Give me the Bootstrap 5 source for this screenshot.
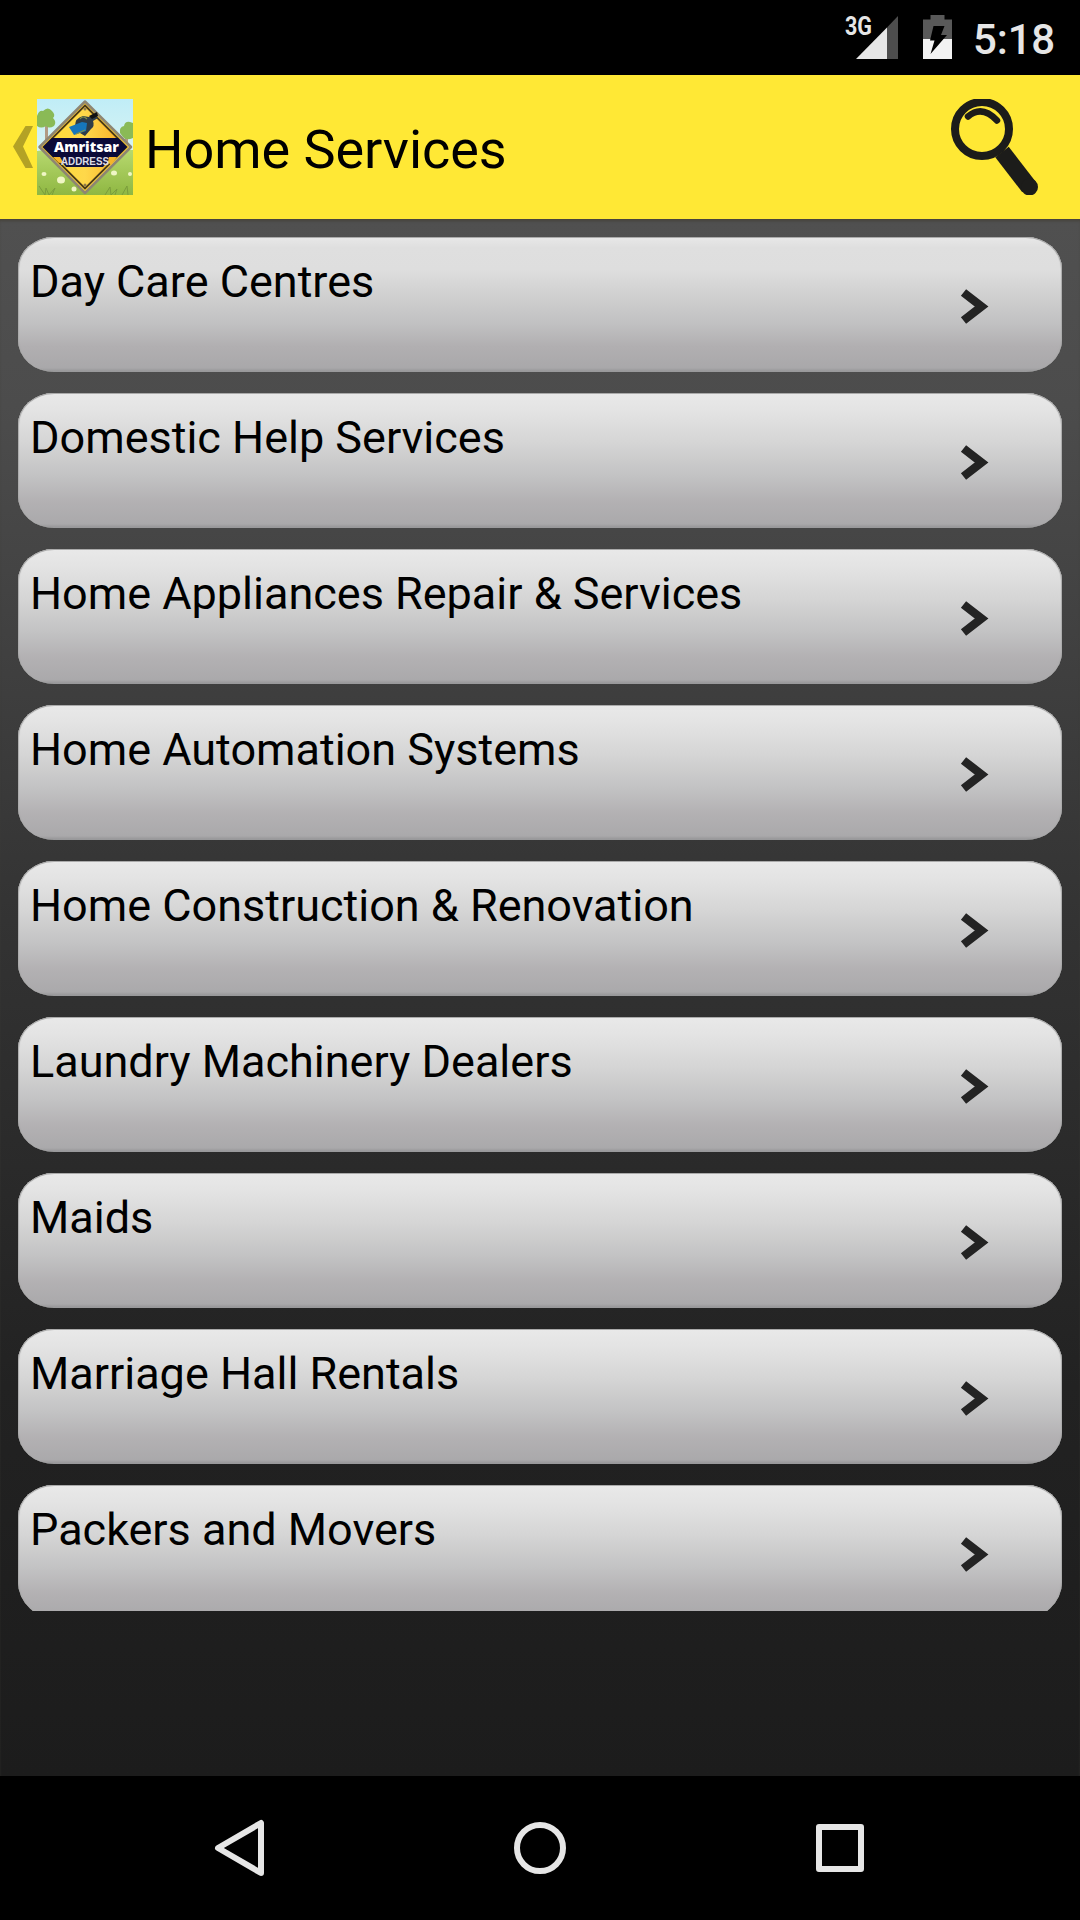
<!DOCTYPE html>
<html lang="en">
<head>
<meta charset="utf-8">
<meta name="viewport" content="width=device-width, initial-scale=1">
<title>Home Services</title>
<link href="https://cdn.jsdelivr.net/npm/bootstrap@5.3.0/dist/css/bootstrap.min.css" rel="stylesheet">
<style>
  body { font-family: Roboto, "Noto Sans", sans-serif; color: #000; height: 1920px; background: #000; }
  svg { display: block; flex: none; }
  .status-strip { height: 75px; padding-right: 25px; }
  .status-clock { font-size: 42px; line-height: 48px; font-weight: 500; color: #e6e6e6; margin: 4px 0 0 19px; letter-spacing: -.2px; }
  .app-header { height: 144px; background: #ffe835; padding: 0 38px 0 12px; }
  .app-title { font-size: 54px; line-height: 64px; font-weight: 400; margin: 5px 0 0 12px; letter-spacing: -.05px; }
  .screen-body { background: linear-gradient(#505050 0, #4c4c4c 12%, #333 45%, #222 75%, #1c1c1c 100%); box-shadow: inset 0 3px 3px -1px #46433b; }
  .service-list { height: 1392px; padding: 18px 18px 0; gap: 21px; }
  .service-item { height: 135px; flex: none; padding: 0 71px 0 12px; border-radius: 36px / 32px; color: #000;
    background: linear-gradient(#e9e9e9 0, #e3e3e3 14%, #d5d5d5 37%, #c2c2c3 62%, #b3b1b3 80%, #aaa9ab 97%, #929294 100%);
    box-shadow: inset 0 1px 0 #aaa, inset 1px 0 1px #aaa, inset -1px 0 1px #aaa; }
  .service-item:first-child { background: linear-gradient(#e8e8e8 0, #dfdfdf 8%, #dedede 24%, #d1d1d1 42%, #c1c1c2 64%, #b1afb1 81%, #a9a8aa 97%, #929294 100%); }
  .service-item:last-child { border-bottom-left-radius: 42px 38px; border-bottom-right-radius: 42px 38px; }
  .service-name { font-size: 45px; line-height: 52px; margin-top: 19px; letter-spacing: -.01px; white-space: nowrap; }
  .nav-keys { height: 144px; }
</style>
<script defer src="https://cdn.jsdelivr.net/npm/bootstrap@5.3.0/dist/js/bootstrap.bundle.min.js"></script>
</head>
<body class="d-flex flex-column overflow-hidden">

<div class="status-strip d-flex justify-content-end align-items-center flex-shrink-0">
  <svg width="110" height="75" viewBox="844 0 110 75">
    <text x="845" y="35" font-size="25" font-weight="700" fill="#e6e6e6" textLength="27" lengthAdjust="spacingAndGlyphs">3G</text>
    <path d="M887 27.5 898 16v43h-11z" fill="#4d4d4d"/>
    <path d="M856 59 887 27.5V59z" fill="#e6e6e6"/>
    <path d="M923 39V19.500h7.500V15h14v4.500H952V39z" fill="#595959"/>
    <path d="M923 39h29v20h-29z" fill="#f2f2f2"/>
    <path d="M933.500 26h11l-3.500 9h6L930.500 54l4-13.500H930z" fill="#000"/>
  </svg>
  <div class="status-clock">5:18</div>
</div>

<header class="app-header d-flex align-items-center flex-shrink-0">
  <svg width="25" height="96" viewBox="12 99 25 96">
    <path d="M25.500 126H33l-10 20.500L33 168h-7.500L13 146.500z" fill="#b3a225"/>
  </svg>
  <svg width="96" height="96" viewBox="0 0 96 96" font-family="'Open Sans', sans-serif" font-weight="800">
    <defs>
      <linearGradient id="sky" x2="0" y2="1"><stop stop-color="#c0edf7"/><stop offset="1" stop-color="#ecf9ee"/></linearGradient>
      <linearGradient id="grass" x2="0" y2="1"><stop stop-color="#b7d96f"/><stop offset="1" stop-color="#8fb742"/></linearGradient>
      <linearGradient id="sign" x2="1" y2="0"><stop stop-color="#ffdc35"/><stop offset=".5" stop-color="#ffd84a"/><stop offset="1" stop-color="#f8a923"/></linearGradient>
    </defs>
    <path d="M0 0h96v96H0z" fill="url(#sky)"/>
    <path d="M8 24h3v36H8zM88 30h3v28h-3z" fill="#b19a83"/>
    <path d="M0 17q2-6 6-5 5-5 9 0 4 4 1 7 4 4 1 8-5 3-8 0-5 3-9 0zM83 34q-1-6 4-7 1-5 6-4l3 1v15q-7 3-10-1z" fill="#8aba56"/>
    <path d="M0 52q14-3 28 5l40 1q14-8 28-7v45H0z" fill="url(#grass)"/>
    <g fill="#f0f6c5"><ellipse cx="7" cy="75" rx="2.500" ry="2"/><ellipse cx="24" cy="81" rx="4" ry="3.500"/><ellipse cx="77" cy="74" rx="3" ry="2.500"/><circle cx="93" cy="75" r="2"/><circle cx="37" cy="90" r="2.500"/></g>
    <path d="m2 87 6 9 1-7 3 7 6-7-3 7M68 96l5-8 1 8 6-6-2 6M85 96l5-9 1 9" fill="none" stroke="#7a9c3c"/>
    <path d="M48 2.500 94 48 48 94 2.500 48z" fill="#ffd03a" stroke="#8e8672" stroke-width="2.500" stroke-linejoin="round"/>
    <path d="M48 6.500 89.500 48 48 89.500 6.500 48z" fill="url(#sign)" stroke="#4a3a18" stroke-width="1.800"/>
    <path d="M15 39h66l9 9-11 11H17L6 48z" fill="#0a0a38"/>
    <path d="M21 58h54L66 68H29z" fill="#111139"/>
    <path d="M16 58h7l3 5-4 1zM72 58h8l-6 8-3-3z" fill="#f6b52a"/>
    <path d="M38 27q0-8 8-10l6 1 5-3 4 4-5 3q2 5-2 8l-6 7-5-3-4-3z" fill="#303d48"/>
    <path d="M52 17l8-4 1 4-6 3z" fill="#111"/>
    <path d="m32 28 13-5 5 1-1 8-12 4z" fill="#1676bb"/>
    <path d="M43 20q3-4 7 0M39 35l9-4" stroke="#829148" stroke-width="1.200" fill="none"/>
    <circle cx="48" cy="10" r="1.500" fill="#917b4d"/><circle cx="48" cy="86" r="1.500" fill="#917b4d"/>
    <text x="17" y="53" font-size="14" fill="#fff" textLength="65" lengthAdjust="spacingAndGlyphs">Amritsar</text>
    <text x="24" y="66" font-size="11" font-family="'Liberation Sans', sans-serif" font-weight="700" fill="#dcdce7" textLength="48" lengthAdjust="spacingAndGlyphs">ADDRESS</text>
  </svg>
  <h1 class="app-title">Home Services</h1>
  <svg class="ms-auto" width="92" height="96" viewBox="950 99 92 96" fill="none" stroke="#1c1c1a">
    <circle cx="982" cy="129" r="27" stroke-width="8"/>
    <path d="M968 116.500q14-12 29 4" stroke-width="6.500" stroke-linecap="round"/>
    <path d="M1002 152 1029 187" stroke-width="17"/>
    <circle cx="1029.500" cy="187" r="8.500" fill="#1c1c1a" stroke="none"/>
  </svg>
</header>

<main class="screen-body flex-grow-1">
  <div class="service-list d-flex flex-column overflow-hidden" id="services"></div>
</main>

<nav class="nav-keys flex-shrink-0">
  <svg width="1080" height="144" viewBox="0 1776 1080 144" fill="none" stroke="#e6e6e6" stroke-width="6" stroke-linejoin="round">
    <path d="M261 1823v50l-43-25z"/>
    <circle cx="540" cy="1848" r="23"/>
    <rect x="819" y="1827" width="42" height="42"/>
  </svg>
</nav>

<script>
  const services = ["Day Care Centres", "Domestic Help Services", "Home Appliances Repair & Services",
    "Home Automation Systems", "Home Construction & Renovation", "Laundry Machinery Dealers",
    "Maids", "Marriage Hall Rentals", "Packers and Movers"];
  const list = document.getElementById("services");
  for (const name of services) {
    const item = document.createElement("a");
    item.className = "service-item d-flex justify-content-between align-items-start text-decoration-none";
    const label = document.createElement("span");
    label.className = "service-name";
    label.textContent = name;
    item.append(label);
    item.insertAdjacentHTML("beforeend",
      '<svg class="align-self-center" width="32" height="38" viewBox="0 0 32 38" fill="none" stroke="#232323" stroke-width="8.500"><path d="M4.500 6.500 22.500 20.500 4.500 34.500"/></svg>');
    list.append(item);
  }
</script>
</body>
</html>
